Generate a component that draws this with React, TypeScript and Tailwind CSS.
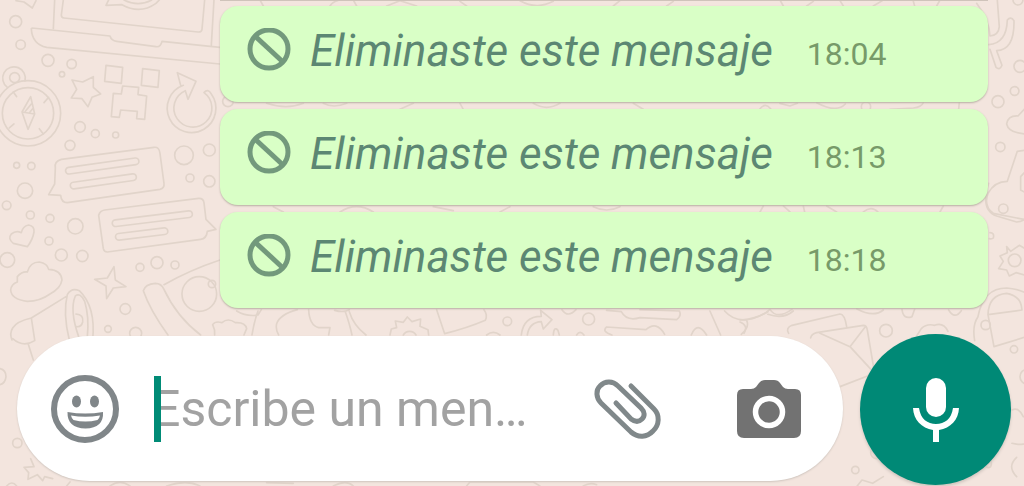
import { useState } from "react";

const messages = [
  { id: 1, text: "Eliminaste este mensaje", time: "18:04" },
  { id: 2, text: "Eliminaste este mensaje", time: "18:13" },
  { id: 3, text: "Eliminaste este mensaje", time: "18:18" },
];

const Wallpaper = () => (
  <svg
    aria-hidden="true"
    viewBox="0 0 1024 486"
    preserveAspectRatio="xMinYMin slice"
    className="absolute inset-0 -z-10 h-full w-full"
    fill="none"
    stroke="#e1d4ca"
    strokeWidth="5"
    strokeLinejoin="round"
    strokeLinecap="round"
  >
    {/* laptop, compass, star, robot, arrow */}
    <g transform="scale(.3333)">
      <path d="M48 2 L72 6 L97 24 L108 2" />
      <path d="M164 0 L160 86 M190 0 L184 45 Q184 53 192 54 L594 96 Q605 97 606 88 L614 0 M642 0 L634 136" />
      <path d="M326 0 L318 16 L366 14 Q420 44 468 10 L478 0 M372 0 Q415 22 455 0" />
      <path d="M96 84 L330 108 Q334 122 350 124 L468 140 Q482 142 486 124 L660 142 M94 86 Q96 132 140 142 L660 192" />
      <circle cx="47" cy="65" r="18" />
      <circle cx="62" cy="134" r="14" />
      <circle cx="144" cy="181" r="18" />
      <circle cx="215" cy="192" r="14" />
      <circle cx="186" cy="223" r="8" />
      <path d="M22 262 A34 34 0 1 1 75 243" />
      <circle cx="44" cy="233" r="15" />
      <circle cx="84" cy="340" r="98" />
      <circle cx="84" cy="340" r="77" />
      <path d="M92 290 L66 336 L84 388 L104 342 Z M66 336 L104 342 M76 334 L94 312 M90 336 L98 326" />
      <path d="M40 276 L50 290 M146 292 L132 308 M28 384 L42 372 M130 402 L118 386" />
      <path d="M216 240 L248 246 L280 230 L280 262 L302 282 L276 292 L264 320 L246 296 L214 294 L230 268 Z" />
      <path d="M318 196 L368 202 L364 250 L314 244 Z M428 206 L478 212 L474 262 L424 256 Z" />
      <path d="M368 258 L416 262 L414 284 L440 288 L434 358 L410 356 L412 334 L362 330 L358 352 L334 350 L340 280 L364 282 Z" />
      <path d="M550 256 A73 73 0 1 0 634 282 Q624 264 612 278 A57 57 0 1 1 556 272 L564 298 L588 244 L532 218 L542 256" />
      <circle cx="240" cy="381" r="16" />
      <circle cx="286" cy="401" r="12" />
      <circle cx="347" cy="405" r="9" />
      <circle cx="210" cy="436" r="15" />
      <circle cx="552" cy="466" r="28" />
      <circle cx="628" cy="450" r="18" />
      <circle cx="684" cy="304" r="16" />
    </g>
    {/* chat cards, heart, cloud, megaphone */}
    <g transform="translate(0 160) scale(.3333)">
      <path d="M184 -2 Q162 4 166 24 L164 72 L146 104 L182 106 Q184 128 202 128 L480 88 Q494 84 492 70 L480 -20 Q478 -40 462 -38 L184 -2" />
      <rect x="196" y="8" width="222" height="20" rx="10" transform="rotate(-8 307 20)" />
      <rect x="210" y="54" width="200" height="20" rx="10" transform="rotate(-8 310 64)" />
      <path d="M296 166 Q300 152 314 150 L596 115 Q610 114 612 128 L618 178 L648 208 L622 214 Q620 236 602 238 L322 276 Q312 276 310 266 Z" />
      <rect x="336" y="166" width="242" height="20" rx="10" transform="rotate(-7 457 176)" />
      <rect x="346" y="212" width="158" height="20" rx="10" transform="rotate(-7 425 222)" />
      <circle cx="50" cy="16" r="9" />
      <circle cx="94" cy="18" r="11" />
      <circle cx="75" cy="92" r="23" />
      <circle cx="20" cy="136" r="13" />
      <circle cx="91" cy="165" r="12" />
      <circle cx="150" cy="175" r="12" />
      <circle cx="226" cy="199" r="23" />
      <circle cx="147" cy="243" r="12" />
      <circle cx="184" cy="285" r="18" />
      <circle cx="247" cy="288" r="17" />
      <circle cx="22" cy="300" r="22" />
      <circle cx="570" cy="54" r="12" />
      <circle cx="628" cy="64" r="17" />
      <circle cx="420" cy="322" r="12" />
      <circle cx="471" cy="308" r="18" />
      <circle cx="525" cy="315" r="12" />
      <circle cx="376" cy="447" r="16" />
      <circle cx="324" cy="507" r="10" />
      <circle cx="407" cy="520" r="18" />
      <path d="M82 260 L40 250 Q22 236 34 222 Q48 210 64 218 Q68 198 86 195 Q104 198 102 216 Q98 240 82 260 Z" />
      <path d="M52 350 Q66 334 82 336 Q90 306 118 306 Q142 310 146 328 Q184 330 186 360 Q182 386 150 402 Q120 424 82 424 Q34 418 32 390 Q34 372 52 366 Z" />
      <path d="M342 320 L346 360 L378 380 L340 384 L320 416 L318 378 L284 358 L322 354 Z" />
      <path d="M104 540 L94 474 Q50 484 38 504 Q28 520 36 540 M94 474 L198 410 M208 540 Q188 460 202 404 Q214 382 238 392 Q288 440 278 540 M236 530 Q208 450 226 408 Q240 396 254 424 Q268 470 262 530 M228 462 Q252 464 248 486 Q244 502 230 500" />
      <path d="M504 525 Q450 450 430 392 Q436 372 466 370 Q484 370 492 388 Q530 470 602 525 M492 374 Q570 330 660 300" />
      <circle cx="598" cy="402" r="52" />
      <circle cx="636" cy="372" r="11" />
      <path d="M644 525 Q646 510 638 494 Q646 482 666 488 Q684 472 706 488 Q736 486 740 506 L732 525" />
    </g>
    {/* strip under the last bubble */}
    <g transform="translate(200 295) scale(.3333)">
      <path d="M110 48 Q140 66 174 60 L184 44 M174 48 Q162 80 156 120 M292 44 Q240 58 230 86 Q226 104 236 120 M326 44 Q328 90 356 98 L390 98 L386 120 M404 46 Q430 54 448 44 M436 50 Q450 90 456 120 M448 50 Q460 90 498 120" />
      <path d="M570 120 L574 102 L590 98 L586 78 L610 82 L622 66 L636 80 L662 72 L660 94 L684 104 L686 120 M610 120 A22 22 0 0 1 648 120" />
      <path d="M710 44 L734 116 Q800 100 856 76 Q864 60 852 44" />
      <path d="M964 120 Q970 64 1024 64 L1022 46 L1056 74 L1030 102 L1024 80 Q988 82 982 120" />
      <circle cx="922" cy="79" r="13" />
      <circle cx="1166" cy="72" r="18" />
      <path d="M1086 44 Q1104 70 1128 44 M1060 120 Q1062 92 1074 106 L1078 120 M1130 120 Q1140 104 1152 120 M860 120 Q880 104 900 120" />
      <path d="M1220 46 L1264 50 Q1280 80 1320 68 L1430 74 Q1446 62 1438 48 L1320 44 M1236 120 Q1204 110 1220 96 L1338 104 Q1370 76 1394 118 M1474 120 Q1492 76 1520 120 M1530 48 L1562 120 M1574 48 Q1620 100 1704 50 M1640 76 Q1650 96 1624 118 M1704 58 Q1750 74 1780 48" />
    </g>
    {/* envelopes and the right edge */}
    <g transform="translate(740 200) scale(.3333)">
      <path d="M146 400 Q136 384 156 376 L300 342 Q314 342 320 380 M212 414 Q214 402 230 398 L370 376 Q380 376 382 390 L404 520 L300 560 M376 380 L330 440 L240 400 M404 520 L330 440" />
      <circle cx="438" cy="392" r="19" />
      <path d="M350 326 Q400 354 430 330 M486 328 Q490 360 516 350 L524 328 M626 330 Q644 360 664 332 M0 360 Q60 356 90 328 Q110 360 156 328 M0 366 Q26 376 12 400" />
      <circle cx="498" cy="578" r="20" />
      <circle cx="412" cy="562" r="20" />
      <circle cx="410" cy="758" r="18" />
      <circle cx="346" cy="810" r="11" />
      <path d="M530 408 L544 386 Q560 370 584 376 Q610 366 624 394" />
      <path d="M704 422 Q696 376 714 350 Q730 264 800 264 Q832 266 860 280 M744 344 Q746 284 800 280 Q844 288 846 330 Z M744 344 L762 440 L860 410" />
      <circle cx="737" cy="375" r="14" />
      <circle cx="824" cy="181" r="19" />
      <path d="M800 140 L812 154 L838 136 L856 146 M800 140 L802 158 L780 168 L790 184 L776 206 L800 210 L808 228 L828 218 L856 226" />
      <circle cx="790" cy="26" r="14" />
      <path d="M746 -50 Q720 30 770 48 L830 66 Q850 66 860 50 M750 98 Q764 98 760 114 Q756 118 748 116" />
      <circle cx="822" cy="448" r="11" />
      <circle cx="862" cy="530" r="22" />
      <path d="M816 630 Q836 620 850 650 M816 730 Q860 740 860 720 M738 800 Q724 780 738 764 Q760 780 752 800 Q746 806 738 800 M830 830 Q800 800 830 772" />
      <path d="M0 740 Q20 700 14 650 M350 860 L366 840 L398 850 L430 830" />
    </g>
    <g transform="translate(740 0) scale(.3333)">
      <path d="M710 10 Q748 60 750 108 Q776 106 778 80 L772 0 M746 134 Q800 130 802 60 Q812 48 822 62 Q824 150 770 152 L786 196 Q780 212 768 202 L750 148" />
      <circle cx="834" cy="0" r="15" />
      <circle cx="840" cy="199" r="18" />
      <circle cx="824" cy="273" r="13" />
      <circle cx="774" cy="305" r="18" />
      <circle cx="781" cy="441" r="14" />
      <path d="M860 402 Q806 400 800 372 Q804 346 834 348 L860 320 M860 450 L832 454 L802 544 Q764 544 744 580 Q730 620 760 640 L860 660 M860 510 L842 530 L842 570 L860 580" />
      <path d="M120 0 L130 18 M200 18 L220 4 M300 2 L310 18 M400 18 L430 0 M520 4 L524 18 M590 18 L600 0 M60 326 Q76 306 92 326 M120 310 L150 318 L172 310 M230 308 Q290 340 316 312 M450 328 L520 324 Q544 322 550 308 M658 308 L656 328 M60 636 L70 618 M130 618 L150 636 M190 618 L194 636 M260 618 L290 636 M370 636 Q394 616 414 636 M600 636 L610 618" />
      <circle cx="378" cy="320" r="14" />
    </g>
    <g transform="translate(200 0) scale(.3333)">
      <path d="M190 18 L180 0 M390 18 Q400 0 430 0 M460 0 L470 18 M560 18 L600 2 L650 18 M780 4 L800 18 M960 2 Q1010 30 1060 4 M1240 18 L1260 2 M1400 18 L1420 4 M200 310 Q260 330 310 310 M370 310 Q400 326 440 310 M600 328 L640 310 M780 310 L790 328 M1000 310 Q1040 334 1080 310 M1300 310 L1330 328 M220 620 L250 636 M420 636 Q470 604 520 636 M700 620 L760 632 M900 636 L930 620 M1180 620 Q1220 640 1260 620" />
    </g>
    {/* around the composer */}
    <g transform="translate(0 320) scale(.3333)">
      <path d="M38 56 Q70 84 104 62 M84 70 L100 120 M0 146 Q18 150 18 170 Q16 190 0 194" />
      <circle cx="52" cy="369" r="14" />
      <path d="M92 416 L102 440 L72 442 L86 458 L84 478 L112 464 L128 482 L134 470 L158 476 M20 498 Q36 480 50 498 M200 498 L210 486 M330 498 Q360 476 390 498 M500 498 Q560 478 600 498 M800 488 L880 490 M1000 498 Q1040 478 1060 498 M1400 498 L1410 486 L1600 486 L1620 498 M1750 498 Q1770 486 1790 494" />
    </g>
  </svg>
);

const BannedIcon = () => (
  <svg viewBox="0 0 44 44" className="size-11 shrink-0" fill="none" stroke="#73997c" strokeWidth="5" aria-hidden="true">
    <circle cx="22" cy="21" r="19" />
    <path d="M8 8 L36 34" />
  </svg>
);

const SmileyIcon = () => (
  <svg viewBox="0 0 68 68" className="size-[68px]" aria-hidden="true">
    <circle cx="34" cy="34" r="31" fill="none" stroke="#808689" strokeWidth="6" />
    <ellipse cx="25.500" cy="26.500" rx="4.500" ry="6" fill="#808689" />
    <ellipse cx="43.500" cy="26.500" rx="4.500" ry="6" fill="#808689" />
    <path d="M16.500 37 Q34 40 52 37 Q53 53 34.500 53.500 Q16 53 16.500 37 Z" fill="#808689" />
    <path d="M20 40.500 Q34 43 49 40.500 Q48.500 43 46.500 45 Q34.500 48 22.500 45 Q20.500 43 20 40.500 Z" fill="#fff" />
  </svg>
);

const ClipIcon = () => (
  <svg viewBox="0 0 68 62" className="h-[62px] w-[68px]" fill="none" stroke="#80888a" strokeWidth="5" strokeLinecap="round" aria-hidden="true">
    <path d="M37 8 L60 31 C66 37 65.500 47 59 53 C53 59.500 44 60 37 54 L7 25 C2 20 1.500 12 6 8 C11 2.500 19 3 24 8 L47 30 C51 34 51 38 48 41 C45 44 41 44 37 41 L22 25" />
  </svg>
);

const CameraIcon = () => (
  <svg viewBox="0 0 64 58" className="h-[58px] w-16" aria-hidden="true">
    <path
      d="M6 9 H14 Q17 9 19 7 L22 3 Q24 0 28 0 H37 Q41 0 43 3 L46 7 Q48 9 51 9 H58 Q64 9 64 15 V51 Q64 58 57 58 H7 Q0 58 0 51 V15 Q0 9 6 9 Z"
      fill="#727272"
    />
    <circle cx="32" cy="32" r="13.500" fill="none" stroke="#fff" strokeWidth="5.500" />
  </svg>
);

const MicIcon = () => (
  <svg viewBox="0 0 48 66" className="h-[66px] w-12" aria-hidden="true">
    <rect x="14" y="1" width="20" height="39" rx="10" fill="#fff" />
    <path d="M1 31 H7 C8.500 42 15.500 47 24 47 C32.500 47 39.500 42 41 31 H47 C46.500 43 38.500 51 27 53 V65 H21 V53 C9.500 51 1.500 43 1 31 Z" fill="#fff" />
  </svg>
);

const App = () => {
  const [draft, setDraft] = useState("");

  return (
    <main className="relative isolate min-h-screen overflow-hidden bg-[#f3e5de] font-[Roboto,sans-serif]">
      <Wallpaper />
      <div className="mr-9 ml-[220px] h-px bg-[#cfc3ba]" />
      <ul className="mt-[5px] mr-9 ml-[220px] flex flex-col gap-[7px]">
        {messages.map((message) => (
          <li
            key={message.id}
            className="flex h-24 items-center rounded-[18px] bg-[#d9ffc6] pb-2 pl-[27px] shadow-[0_1px_2px_#b7aea3]"
          >
            <BannedIcon />
            <p className="mt-0.5 ml-[19px] text-[44px] leading-[52px] whitespace-nowrap text-[#5c8773] italic">
              {message.text}
            </p>
            <time className="mt-2 ml-[34px] text-[32px] leading-10 text-[#779a69]">
              {message.time}
            </time>
          </li>
        ))}
      </ul>

      <form
        className="mt-[26px] flex items-start gap-[17px] pr-[13px] pl-[17px]"
        onSubmit={(event) => {
          event.preventDefault();
          setDraft("");
        }}
      >
        <div className="mt-0.5 flex h-[145px] min-w-0 flex-1 items-center rounded-full bg-white pr-[42px] pl-[34px] shadow-[0_1px_2px_#cfc5be]">
          <button type="button" aria-label="Emojis" className="shrink-0">
            <SmileyIcon />
          </button>
          <div className="relative ml-[33px] min-w-0 flex-1">
            <input
              type="text"
              aria-label="Mensaje"
              placeholder="Escribe un men…"
              value={draft}
              onChange={(event) => setDraft(event.target.value)}
              className="block h-[66px] w-full text-[50px] leading-[66px] text-gray-800 outline-none placeholder:text-[#a2a2a2]"
            />
            <span className="pointer-events-none absolute inset-y-0 left-0.5 w-[7px] bg-[#008b76]" />
          </div>
          <button type="button" aria-label="Adjuntar" className="shrink-0">
            <ClipIcon />
          </button>
          <button type="button" aria-label="Cámara" className="ml-[75px] shrink-0">
            <CameraIcon />
          </button>
        </div>
        <button
          type="submit"
          aria-label="Mensaje de voz"
          className="flex size-[151px] shrink-0 items-center justify-center rounded-full bg-[#008976] shadow-[0_2px_3px_#cfc5be]"
        >
          <MicIcon />
        </button>
      </form>
    </main>
  );
};

export default App;
